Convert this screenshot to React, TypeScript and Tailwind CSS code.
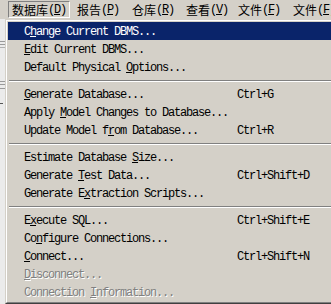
import React from "react";

type Item =
  | { sep: true }
  | { label: string; u: number; key?: string; active?: boolean; disabled?: boolean; sep?: false };

const ITEMS: Item[] = [
  { label: "Change Current DBMS...", u: 1, active: true },
  { label: "Edit Current DBMS...", u: 0 },
  { label: "Default Physical Options...", u: 17 },
  { sep: true },
  { label: "Generate Database...", u: 0, key: "Ctrl+G" },
  { label: "Apply Model Changes to Database...", u: 6 },
  { label: "Update Model from Database...", u: 14, key: "Ctrl+R" },
  { sep: true },
  { label: "Estimate Database Size...", u: 18 },
  { label: "Generate Test Data...", u: 9, key: "Ctrl+Shift+D" },
  { label: "Generate Extraction Scripts...", u: 10 },
  { sep: true },
  { label: "Execute SQL...", u: 1, key: "Ctrl+Shift+E" },
  { label: "Configure Connections...", u: 2 },
  { label: "Connect...", u: 0, key: "Ctrl+Shift+N" },
  { label: "Disconnect...", u: 0, disabled: true },
  { label: "Connection Information...", u: 11, disabled: true },
];

const BAR = [
  { zh: "数据库", k: "D", w: "w-[62px] mr-[3px]", pressed: true },
  { zh: "报告", k: "P", w: "w-[55px]" },
  { zh: "仓库", k: "R", w: "w-[54px]" },
  { zh: "查看", k: "V", w: "w-[52px]" },
  { zh: "文件", k: "F", w: "w-[55px]" },
  { zh: "文件", k: "F", w: "w-[55px]" },
];

const mono = "font-['Liberation_Mono',monospace] text-[12px] tracking-[-1.2px]";

function Label({ text, u }: { text: string; u: number }) {
  return (
    <span>
      {text.slice(0, u)}
      <u className="underline-offset-1">{text[u]}</u>
      {text.slice(u + 1)}
    </span>
  );
}

export default function App() {
  return (
    <div className="w-[331px] h-[304px] overflow-hidden bg-[#d4d0c8] flex flex-col text-black">
      {/* menu bar */}
      <div className="h-[19px] flex items-stretch pl-[8px] shrink-0">
        {BAR.map((b, i) => (
          <div
            key={i}
            className={`${b.w} shrink-0 flex items-center pl-[3px] mt-px mb-px ${
              b.pressed ? "border border-t-[#808080] border-l-[#808080] border-b-white border-r-white" : "pl-[4px]"
            }`}
          >
            <span className="font-['Noto_Sans_CJK_SC',sans-serif] text-[12px] leading-none whitespace-nowrap">{b.zh}</span>
            <span className={`${mono} leading-none whitespace-nowrap`}>
              (<u className="underline-offset-1">{b.k}</u>)
            </span>
          </div>
        ))}
      </div>

      <div className="flex flex-1 min-h-0">
        {/* background app strip */}
        <div className="w-[5px] shrink-0 bg-[#ebebeb] flex flex-col">
          <div className="mt-[22px] h-px bg-[#9a9a9a]" />
          <div className="mt-[2px] h-px bg-[#9a9a9a]" />
          <div className="mt-[2px] h-px bg-[#b0b0b0]" />
          <div className="mt-[33px] h-px bg-[#9a9a9a]" />
          <div className="mt-[2px] h-px bg-[#9a9a9a]" />
          <div className="mt-[3px] h-px bg-[#9a9a9a]" />
          <div className="mt-[14px] h-px w-[3px] bg-[#555]" />
        </div>

        {/* dropdown */}
        <div className="w-[340px] shrink-0 border border-t-[#d4d0c8] border-l-[#d4d0c8] border-b-[#404040] border-r-[#404040]">
          <div className="h-full border border-t-white border-l-white border-b-[#808080] border-r-[#808080] p-px flex flex-col">
            {ITEMS.map((it, i) =>
              it.sep ? (
                <div key={i} className="h-[9px] flex flex-col justify-center px-px shrink-0">
                  <div className="h-px bg-[#808080]" />
                  <div className="h-px bg-white" />
                </div>
              ) : (
                <div
                  key={i}
                  className={`h-[18px] shrink-0 flex items-center pt-[2px] pl-[16px] whitespace-nowrap ${mono} ${
                    it.active ? "bg-[#0a246a] text-white" : it.disabled ? "text-[#808080] [text-shadow:1px_1px_0_#ffffff]" : ""
                  }`}
                >
                  <div className="w-[213px] shrink-0">
                    <Label text={it.label} u={it.u} />
                  </div>
                  {it.key && <span>{it.key}</span>}
                </div>
              )
            )}
          </div>
        </div>
      </div>
    </div>
  );
}
